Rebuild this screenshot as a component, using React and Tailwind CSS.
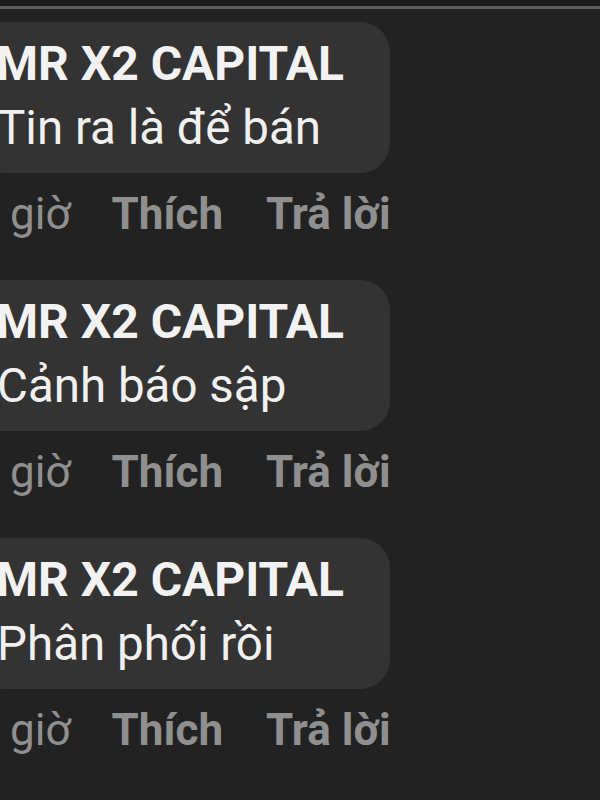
import React from 'react';

const comments = ['Tin ra là để bán', 'Cảnh báo sập', 'Phân phối rồi'];

function Comment({ text }) {
  return (
    <div className="flex flex-col">
      <div className="-ml-[26px] w-[416px] h-[151px] rounded-[30px] bg-[#333333] pl-[22px] pt-[12px]">
        <div className="text-[48px] leading-[60px] font-bold text-[#f2f2f2] whitespace-nowrap">MR X2 CAPITAL</div>
        <div className="mt-[3px] pl-[1px] text-[47.5px] leading-[62px] text-[#f0f0f0] whitespace-nowrap">{text}</div>
      </div>
      <div className="mt-[15px] h-[92px] flex items-start text-[44px] leading-[52px] text-[#8f8f8f] whitespace-nowrap">
        <span className="ml-[10px]">giờ</span>
        <span className="ml-[41px] font-bold">Thích</span>
        <span className="ml-[43px] font-bold">Trả lời</span>
      </div>
    </div>
  );
}

export default function App() {
  return (
    <div className="w-[600px] h-[800px] overflow-hidden bg-[#222222] font-['Roboto',sans-serif]">
      <div className="h-[6px] bg-[#1c1c1c]" />
      <div className="h-[3px] bg-[#5e5e5e]" />
      <div className="pt-[13px] flex flex-col">
        {comments.map((c) => (
          <Comment key={c} text={c} />
        ))}
      </div>
    </div>
  );
}
